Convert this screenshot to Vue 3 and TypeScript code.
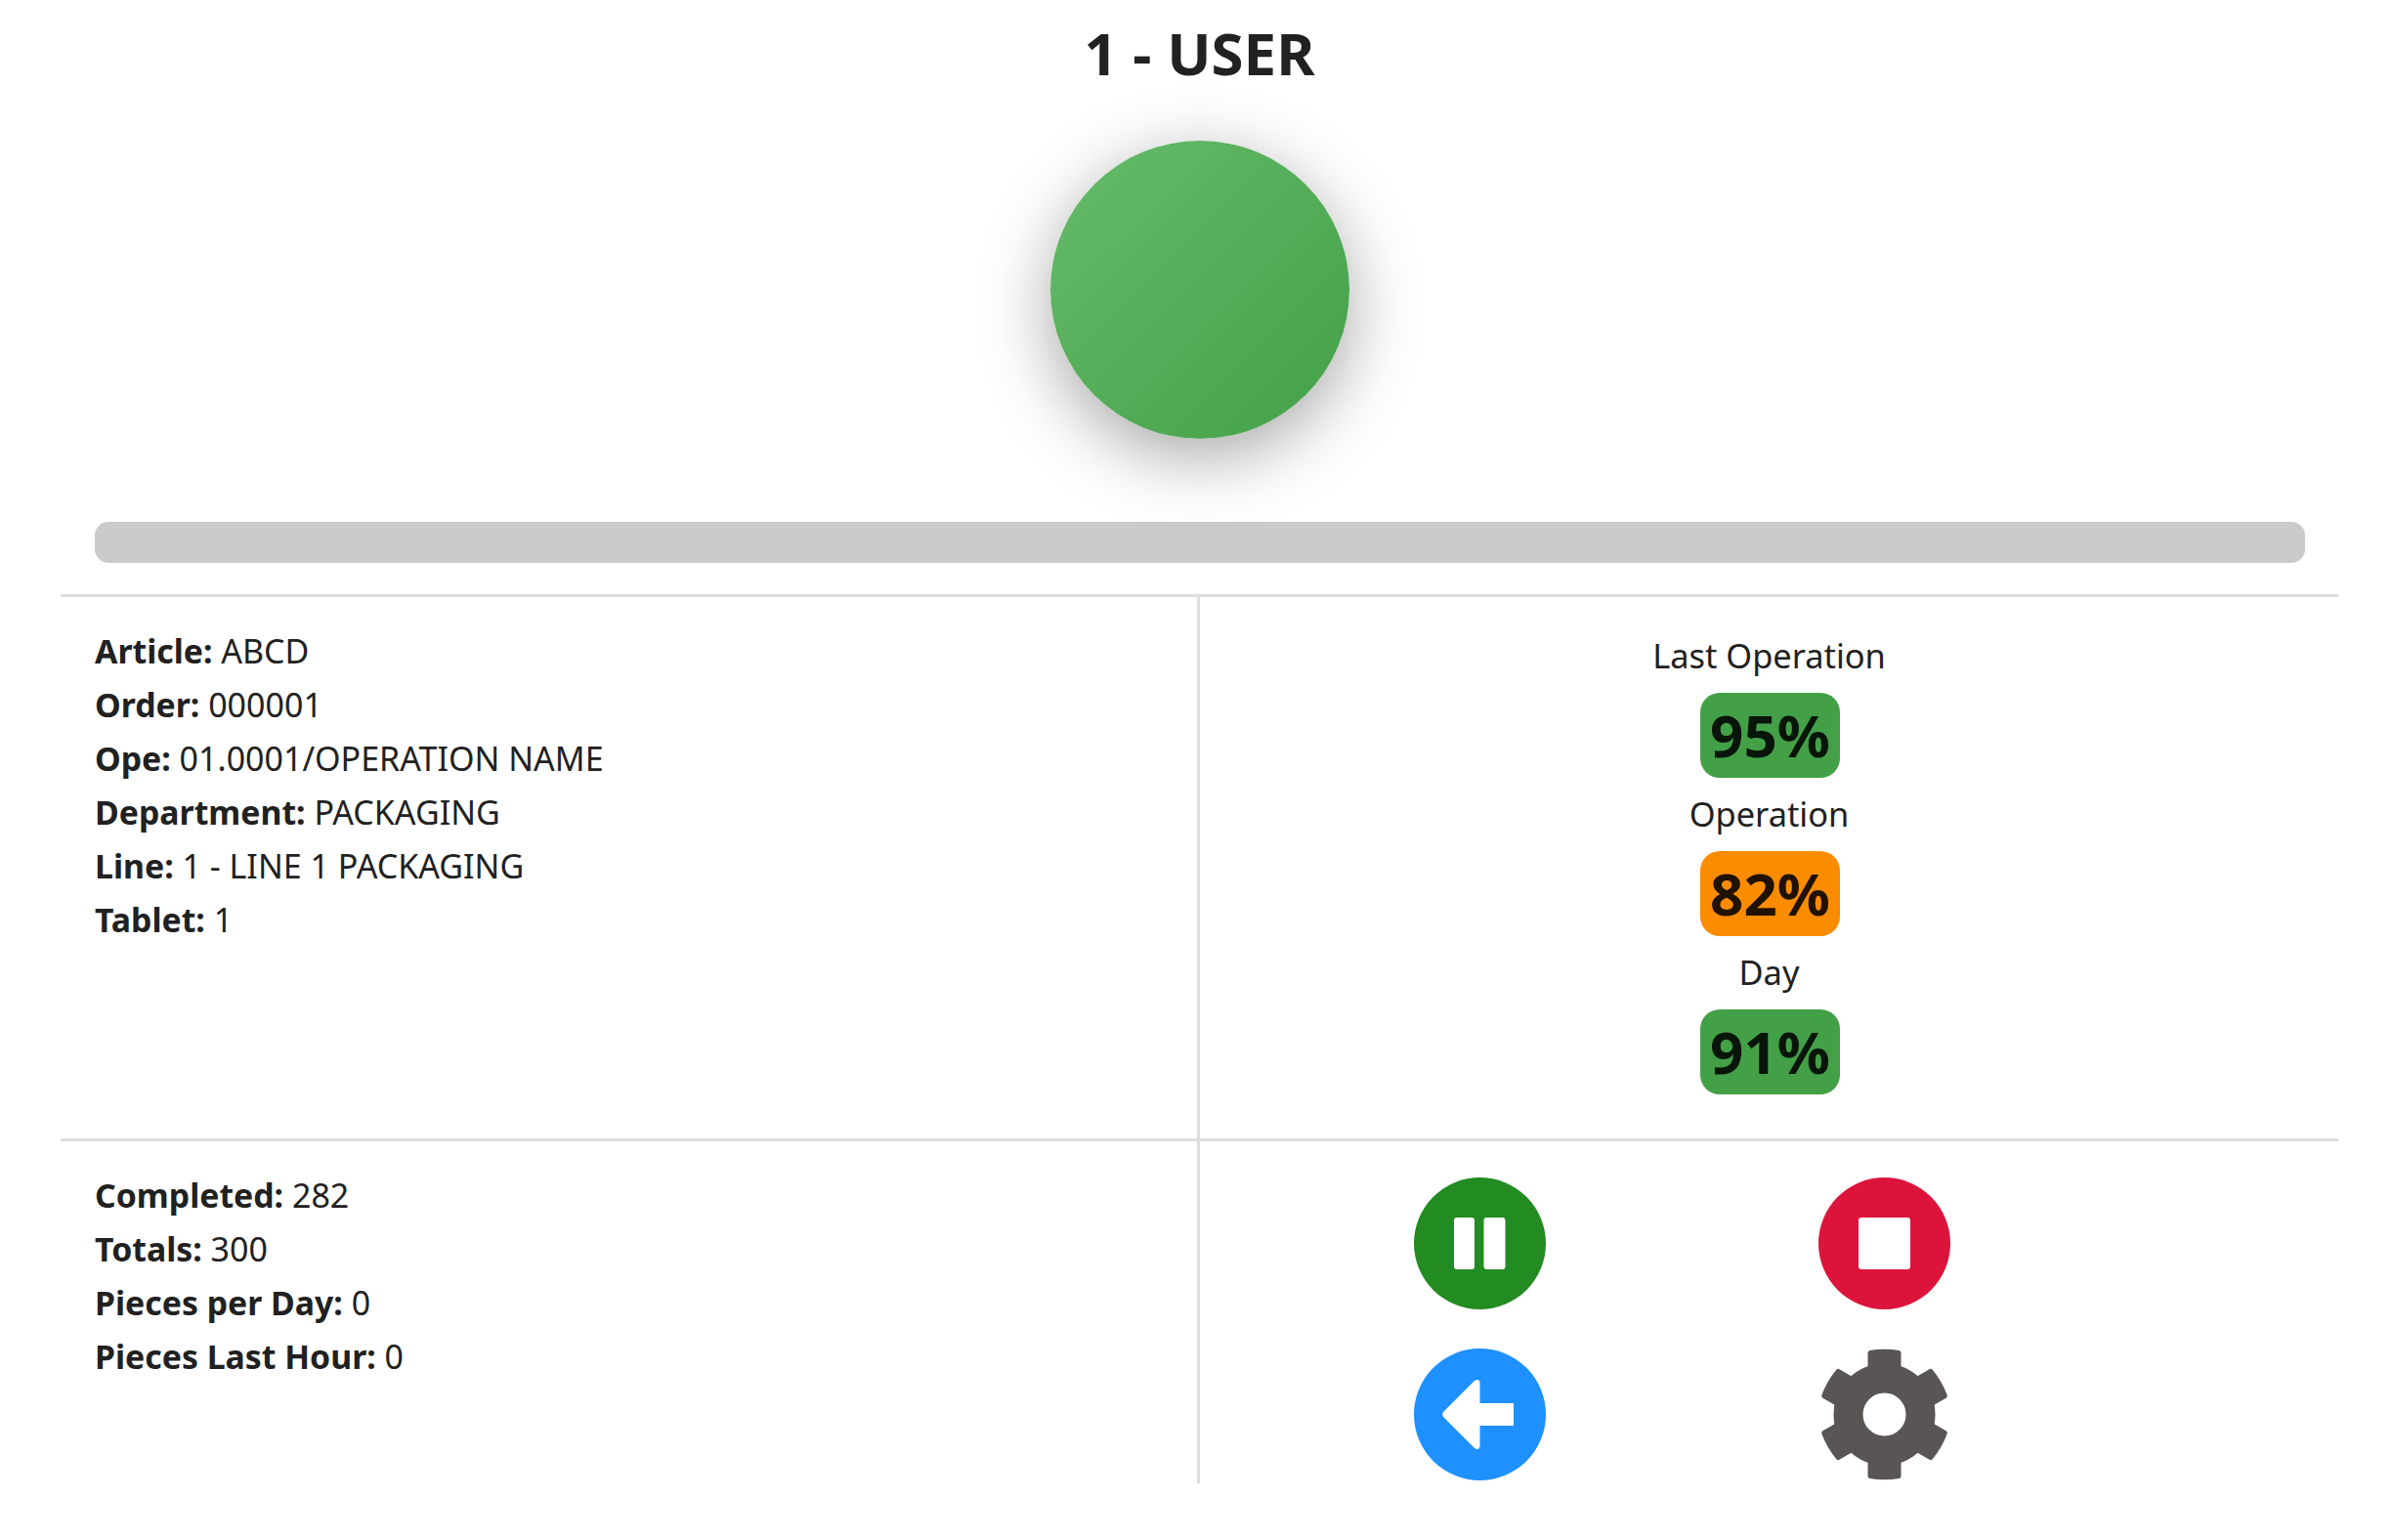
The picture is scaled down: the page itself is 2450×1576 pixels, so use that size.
<template>
  <div class="page">
    <h1 class="title">1 - USER</h1>

    <div class="status">
      <div class="status-light"></div>
    </div>

    <div class="progress"></div>

    <section class="row row-info">
      <div class="cell details">
        <div v-for="item in details" :key="item.label">
          <strong>{{ item.label }}:</strong> {{ item.value }}
        </div>
      </div>
      <div class="cell rates">
        <template v-for="rate in rates" :key="rate.label">
          <div class="rate-label">{{ rate.label }}</div>
          <div class="rate-badge" :class="rate.tone">{{ rate.value }}%</div>
        </template>
      </div>
    </section>

    <section class="row row-actions">
      <div class="cell details">
        <div v-for="item in counters" :key="item.label">
          <strong>{{ item.label }}:</strong> {{ item.value }}
        </div>
      </div>
      <div class="cell actions">
        <button type="button" class="action pause" aria-label="Pause">
          <svg viewBox="0 0 135 135" width="135" height="135">
            <rect x="41" y="41" width="21" height="53" rx="3" fill="#fff" />
            <rect x="71.5" y="41" width="22" height="53" rx="3" fill="#fff" />
          </svg>
        </button>
        <button type="button" class="action stop" aria-label="Stop">
          <svg viewBox="0 0 135 135" width="135" height="135">
            <rect x="41" y="41" width="53" height="53" rx="3" fill="#fff" />
          </svg>
        </button>
        <button type="button" class="action back" aria-label="Back">
          <svg viewBox="0 0 135 135" width="135" height="135">
            <path
              d="M30.5 64.5 L62 33 Q67.5 30 67.5 36 V56 H102 V79 H67.5 V99 Q67.5 105 62 102 L30.5 70.5 Q28 67.5 30.5 64.5 Z"
              fill="#fff"
            />
          </svg>
        </button>
        <button type="button" class="action settings" aria-label="Settings">
          <svg viewBox="-67.5 -67.5 135 135" width="135" height="135">
            <circle r="37" fill="none" stroke="#5a5555" stroke-width="30" />
            <path
              v-for="angle in teeth"
              :key="angle"
              :transform="`rotate(${angle})`"
              d="M-17 -46 V-63 Q-17 -65 -15 -65.5 Q0 -68 15 -65.5 Q17 -65 17 -63 V-46 Z"
              fill="#5a5555"
            />
          </svg>
        </button>
      </div>
    </section>
  </div>
</template>

<script setup lang="ts">
const details = [
  { label: "Article", value: "ABCD" },
  { label: "Order", value: "000001" },
  { label: "Ope", value: "01.0001/OPERATION NAME" },
  { label: "Department", value: "PACKAGING" },
  { label: "Line", value: "1 - LINE 1 PACKAGING" },
  { label: "Tablet", value: "1" },
];

const counters = [
  { label: "Completed", value: 282 },
  { label: "Totals", value: 300 },
  { label: "Pieces per Day", value: 0 },
  { label: "Pieces Last Hour", value: 0 },
];

const rates = [
  { label: "Last Operation", value: 95, tone: "good" },
  { label: "Operation", value: 82, tone: "warn" },
  { label: "Day", value: 91, tone: "good" },
];

const teeth = [0, 60, 120, 180, 240, 300];
</script>

<style>
html,
body {
  margin: 0;
  background: #fff;
}
</style>

<style scoped>
.page {
  box-sizing: border-box;
  width: 2450px;
  height: 1576px;
  padding: 0 57px 0 62px;
  font-family: "Noto Sans", sans-serif;
  font-size: 34.4px;
  line-height: 55px;
  color: #212121;
}

.title {
  margin: 0;
  height: 112px;
  font-size: 60px;
  line-height: 108px;
  font-weight: 700;
  text-align: center;
}

.status {
  display: flex;
  justify-content: center;
  padding-top: 32px;
}

.status-light {
  width: 306px;
  height: 305px;
  border-radius: 50%;
  background: linear-gradient(135deg, #66bb6a, #43a047);
  box-shadow: 0 18px 70px rgba(0, 0, 0, 0.35);
}

.progress {
  height: 42px;
  margin: 85px 34px 0 35px;
  border-radius: 14px;
  background: #cccbcc;
}

.row {
  display: grid;
  grid-template-columns: 1166px 1fr;
  box-sizing: border-box;
  border-top: 3px solid #ddd;
}

.row-info {
  margin-top: 32px;
  height: 557px;
}

.row-actions {
  height: 353px;
}

.cell:first-child {
  border-right: 3px solid #ddd;
}

.details {
  padding: 28px 0 0 35px;
  font-size: 34px;
}

.details strong {
  font-size: 33.8px;
}

.rates {
  display: flex;
  flex-direction: column;
  align-items: center;
  padding-top: 32px;
}

.rate-label {
  margin-bottom: 11px;
}

.rate-badge {
  width: 143px;
  height: 87px;
  margin: 0 0 9px 2px;
  border-radius: 20px;
  font-size: 60px;
  line-height: 86px;
  font-weight: 700;
  text-align: center;
  color: rgba(0, 0, 0, 0.87);
}

.good {
  background: #43a047;
}

.warn {
  background: #fb8c00;
}

.actions {
  display: grid;
  grid-template-columns: repeat(2, 414px);
  grid-auto-rows: 135px;
  row-gap: 40px;
  padding: 37px 0 0 79px;
  justify-items: center;
}

.action {
  width: 135px;
  height: 135px;
  padding: 0;
  border: 0;
  border-radius: 50%;
  background: transparent;
  cursor: pointer;
}

.action svg {
  display: block;
}

.pause {
  background: #228b22;
}

.stop {
  background: #dc143c;
}

.back {
  background: #1e90ff;
}
</style>
